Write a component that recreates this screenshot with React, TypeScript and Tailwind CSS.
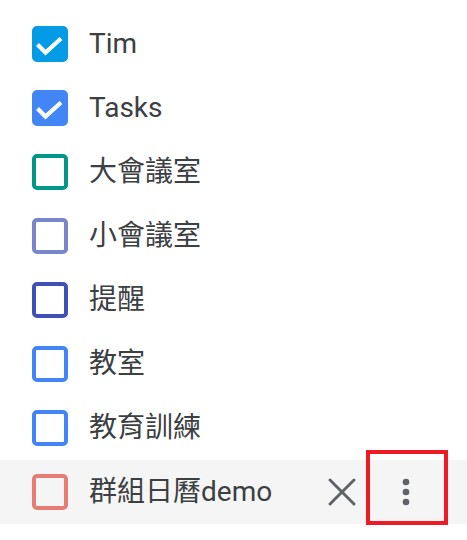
import { X } from "lucide-react";

type Cal = { name: string; color: string; checked: boolean; hover?: boolean };

const calendars: Cal[] = [
  { name: "Tim", color: "border-[#039be5] bg-[#039be5]", checked: true },
  { name: "Tasks", color: "border-[#4285f4] bg-[#4285f4]", checked: true },
  { name: "大會議室", color: "border-[#009688]", checked: false },
  { name: "小會議室", color: "border-[#7986cb]", checked: false },
  { name: "提醒", color: "border-[#3f51b5]", checked: false },
  { name: "教室", color: "border-[#4285f4]", checked: false },
  { name: "教育訓練", color: "border-[#4285f4]", checked: false },
  { name: "群組日曆demo", color: "border-[#e67c73]", checked: false, hover: true },
];

const Check = () => (
  <svg viewBox="0 0 36 36" className="absolute -inset-[4px] h-9 w-9">
    <path d="M5.5 18.5 L13.5 26.5 L29 12.5" fill="none" stroke="white" strokeWidth="4.2" />
  </svg>
);

const App = () => {
  return (
    <div
      className="relative w-[467px] h-[540px] bg-white pt-3"
      style={{ fontFamily: "Roboto, 'Noto Sans CJK TC', sans-serif" }}
    >
      {calendars.map((c) => (
        <div
          key={c.name}
          className={`flex items-center h-16 pl-8 ${c.hover ? "bg-[#f5f5f5]" : ""}`}
        >
          <div className={`relative h-9 w-9 border-4 rounded-[5px] shrink-0 ${c.color}`}>
            {c.checked && <Check />}
          </div>
          <span className="ml-[21px] text-[28px] text-[#3c4043] leading-none">{c.name}</span>
          {c.hover && (
            <div className="ml-auto flex items-center">
              <div className="w-12 h-12 flex items-center justify-center text-[#5f6368]">
                <X className="w-12 h-12" strokeWidth={1.5} />
              </div>
              <div className="ml-5 mr-[41px] w-10 h-10 flex items-center justify-center">
                <svg viewBox="0 0 24 24" className="w-10 h-10" fill="#5f6368">
                  <circle cx="12" cy="6" r="2" />
                  <circle cx="12" cy="12" r="2" />
                  <circle cx="12" cy="18" r="2" />
                </svg>
              </div>
            </div>
          )}
        </div>
      ))}
      <div className="absolute left-[366px] top-[450px] w-[82px] h-[75px] border-4 border-[#ed1c24]" />
    </div>
  );
};

export default App;
